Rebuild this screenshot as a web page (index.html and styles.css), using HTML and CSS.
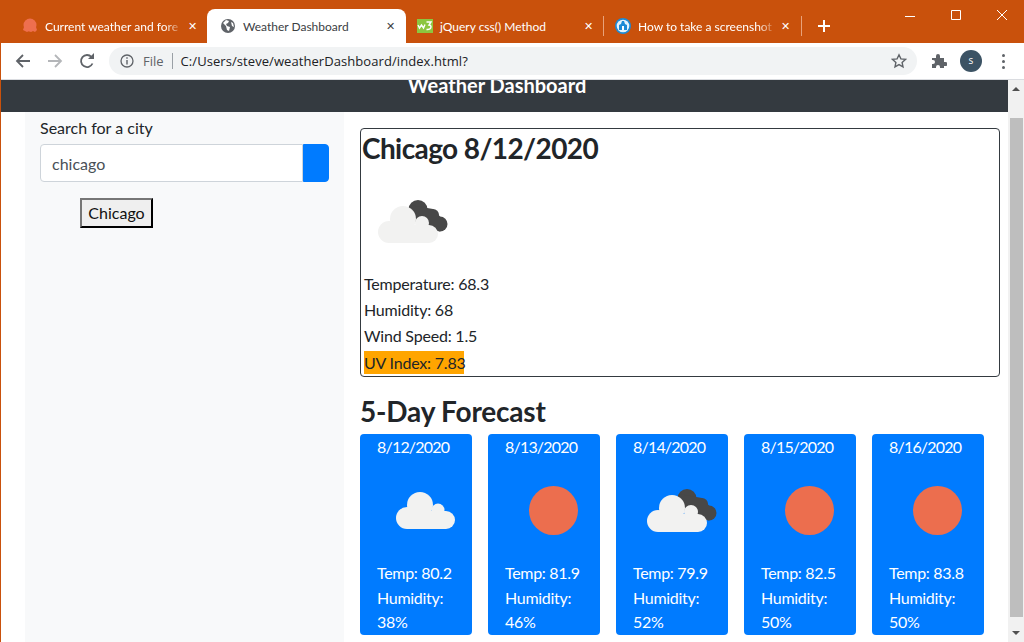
FILE: index.html
```html
<!DOCTYPE html>
<html>
<head>
    <title>Weather Dashboard</title>
    <meta name="viewport" content="width=device-width, initial-scale=1.0">
    <link rel="stylesheet" href="styles.css">
</head>
<body>
<svg class="defs" width="0" height="0">
    <defs>
        <g id="dark-shape">
            <circle cx="54" cy="39.500" r="9.500"/>
            <circle cx="69" cy="45" r="6"/>
            <circle cx="76" cy="54" r="7.500"/>
            <path d="M46 35l23 4 14 15-7 7.500-30-12z"/>
        </g>
        <clipPath id="dark-clip">
            <use href="#dark-shape"/>
        </clipPath>
        <g id="light-cloud" fill="#f2f2f1">
            <circle cx="39" cy="49" r="13"/>
            <circle cx="58" cy="53" r="7"/>
            <circle cx="25" cy="62" r="11"/>
            <circle cx="65" cy="64" r="9"/>
            <rect x="25" y="55" width="40" height="18"/>
        </g>
        <g id="overcast">
            <use href="#dark-shape" fill="#484848"/>
            <g clip-path="url(#dark-clip)" fill="#fafafa">
                <circle cx="39" cy="49" r="14.500"/>
                <circle cx="58" cy="53" r="8.500"/>
                <circle cx="65" cy="64" r="10.500"/>
            </g>
            <use href="#light-cloud"/>
        </g>
        <g id="scattered" fill="#f2f2f1">
            <circle cx="43" cy="46" r="13"/>
            <circle cx="61" cy="51" r="6.500"/>
            <circle cx="30" cy="59" r="11"/>
            <circle cx="69" cy="61" r="9"/>
            <rect x="30" y="52" width="39" height="18"/>
        </g>
    </defs>
</svg>

<div class="tabstrip">
    <div class="tab tab-first">
        <svg class="favicon" viewBox="0 0 16 16"><circle cx="8" cy="7" r="6.500" fill="#ee6f4f"/><path d="M2 9h12l1 3-2 2-2-1-2 1-2-1-2 1-2-1-2-1z" fill="#ee6f4f"/></svg>
        <span class="tab-title fade">Current weather and fore</span>
        <span class="tab-x">&#10005;</span>
    </div>
    <div class="tab tab-active">
        <svg class="favicon" viewBox="0 0 16 16"><circle cx="8" cy="8" r="7" fill="#5f6368"/><path d="M3 5l3-3 3 1-1 2-2 1 1 2 3 1-1 4-2-1-1-4zM11 4l2 1 1 4-2-1z" fill="#fff"/></svg>
        <span class="tab-title">Weather Dashboard</span>
        <span class="tab-x">&#10005;</span>
    </div>
    <div class="tab">
        <svg class="favicon" viewBox="0 0 16 16"><rect y="1" width="16" height="14" fill="#8cc63f"/><path d="M1 7l1.500 3 2-3 2 3L8 6.500M9.500 4H14l-2 3c3 0 3 5-2.500 4.500" fill="none" stroke="#fff" stroke-width="1.400"/></svg>
        <span class="tab-title">jQuery css() Method</span>
        <span class="tab-x">&#10005;</span>
    </div>
    <div class="tab-sep"></div>
    <div class="tab tab-last">
        <svg class="favicon" viewBox="0 0 16 16"><circle cx="8" cy="8" r="8" fill="#1c8ad6"/><circle cx="8" cy="8" r="6.300" fill="#e4f2fb"/><path d="M7 3h2l1 3 2 1v5H4V7l2-1z" fill="#1c8ad6"/><path d="M7 8h2v4H7z" fill="#fff"/></svg>
        <span class="tab-title fade">How to take a screenshot</span>
        <span class="tab-x">&#10005;</span>
    </div>
    <div class="tab-sep"></div>
    <div class="new-tab">
        <svg width="14" height="14" viewBox="0 0 14 14"><path d="M7 1v12M1 7h12" stroke="#fff" stroke-width="2"/></svg>
    </div>
    <div class="win-btns">
        <svg width="16" height="16" viewBox="0 0 16 16"><path d="M2 8.500h10" stroke="#fff"/></svg>
        <svg width="16" height="16" viewBox="0 0 16 16"><path d="M2.500 2.500h9v9h-9z" fill="none" stroke="#fff"/></svg>
        <svg width="16" height="16" viewBox="0 0 16 16"><path d="M2 2l10 10M12 2L2 12" stroke="#fff"/></svg>
    </div>
</div>

<div class="toolbar">
    <svg class="tool-icon" viewBox="0 0 16 16"><path d="M15 8H2M8 2L2 8l6 6" fill="none" stroke="#5f6368" stroke-width="1.800"/></svg>
    <svg class="tool-icon" viewBox="0 0 16 16"><path d="M1 8h13M8 2l6 6-6 6" fill="none" stroke="#b4b6b9" stroke-width="1.800"/></svg>
    <svg class="tool-icon" viewBox="0 0 16 16"><path d="M13.500 10.500A6 6 0 1 1 12.500 4" fill="none" stroke="#5f6368" stroke-width="1.800"/><path d="M9 6h6V0z" fill="#5f6368"/></svg>
    <div class="omnibox">
        <svg class="info" viewBox="0 0 14 14"><circle cx="7" cy="7" r="6" fill="none" stroke="#5f6368" stroke-width="1.300"/><path d="M6.300 6h1.400v4.500H6.300zM6.300 3.300h1.400v1.400H6.300z" fill="#5f6368"/></svg>
        <span class="scheme">File</span>
        <span class="url">C:/Users/steve/weatherDashboard/index.html?</span>
        <svg class="star" viewBox="0 0 16 16"><path d="M8 1.800l1.900 4.100 4.500.5-3.300 3 .9 4.400L8 11.600l-4 2.200.9-4.400-3.300-3 4.500-.5z" fill="none" stroke="#5f6368" stroke-width="1.400"/></svg>
    </div>
    <svg class="puzzle" viewBox="0 0 16 16"><path d="M1 5h4V3a2 2 0 0 1 4 0v2h4v4h1.500a2 2 0 0 1 0 4H13v2H9v-1a2 2 0 0 0-4 0v1H1v-4h1a2 2 0 0 0 0-4H1z" fill="#5f6368"/></svg>
    <div class="avatar">s</div>
    <div class="dots"><i></i><i></i><i></i></div>
</div>

<div class="viewport">
    <div class="page">
        <div class="navbar">Weather Dashboard</div>
        <div class="content">
            <div class="sidebar">
                <label class="search-label">Search for a city</label>
                <div class="input-group">
                    <input class="search-input" type="text" value="chicago">
                    <button class="search-btn"></button>
                </div>
                <button class="city-btn">Chicago</button>
            </div>
            <div class="main">
                <div class="today">
                    <h2>Chicago 8/12/2020</h2>
                    <svg class="weather-icon today-icon" viewBox="0 0 100 100"><use href="#overcast"/></svg>
                    <p>Temperature: 68.3</p>
                    <p>Humidity: 68</p>
                    <p>Wind Speed: 1.5</p>
                    <p><span class="uv">UV Index: 7.83</span></p>
                </div>
                <h3>5-Day Forecast</h3>
                <div class="forecast">
                    <div class="card">
                        <div class="card-date">8/12/2020</div>
                        <svg class="weather-icon" viewBox="0 0 100 100"><use href="#scattered"/></svg>
                        <p>Temp: 80.2</p>
                        <p>Humidity: 38%</p>
                    </div>
                    <div class="card">
                        <div class="card-date">8/13/2020</div>
                        <svg class="weather-icon" viewBox="0 0 100 100"><circle cx="48.500" cy="51.500" r="24.500" fill="#ec6e4e"/></svg>
                        <p>Temp: 81.9</p>
                        <p>Humidity: 46%</p>
                    </div>
                    <div class="card">
                        <div class="card-date">8/14/2020</div>
                        <svg class="weather-icon" viewBox="0 0 100 100"><use href="#overcast"/></svg>
                        <p>Temp: 79.9</p>
                        <p>Humidity: 52%</p>
                    </div>
                    <div class="card">
                        <div class="card-date">8/15/2020</div>
                        <svg class="weather-icon" viewBox="0 0 100 100"><circle cx="48.500" cy="51.500" r="24.500" fill="#ec6e4e"/></svg>
                        <p>Temp: 82.5</p>
                        <p>Humidity: 50%</p>
                    </div>
                    <div class="card">
                        <div class="card-date">8/16/2020</div>
                        <svg class="weather-icon" viewBox="0 0 100 100"><circle cx="48.500" cy="51.500" r="24.500" fill="#ec6e4e"/></svg>
                        <p>Temp: 83.8</p>
                        <p>Humidity: 50%</p>
                    </div>
                </div>
            </div>
        </div>
    </div>
    <div class="scrollbar">
        <div class="arrow-up"></div>
        <div class="thumb"></div>
        <div class="arrow-down"></div>
    </div>
</div>
</body>
</html>
```

FILE: styles.css
```css
html, body {
    margin: 0;
    height: 642px;
    overflow: hidden;
}
body {
    font-family: Lato, "Open Sans", sans-serif;
    background-color: #fff;
    border-left: 1px solid #c9510c;
    box-sizing: border-box;
    width: 1024px;
    color: #212529;
}
.defs {
    display: block;
    height: 0;
}

/* browser chrome */
.tabstrip {
    height: 43px;
    margin-left: -1px;
    background-color: #c9510c;
    display: flex;
    align-items: flex-end;
    padding-left: 9px;
    box-sizing: border-box;
    color: #fff;
    font-size: 12px;
}
.tab {
    width: 197px;
    height: 34px;
    box-sizing: border-box;
    display: flex;
    align-items: center;
    padding: 0 8px 0 11px;
    flex: none;
}
.tab-first {
    width: 198px;
    padding-left: 13px;
}
.tab-active {
    width: 199px;
    padding: 0 9px 0 13px;
    background-color: #fff;
    color: #3c4043;
    border-radius: 8px 8px 0 0;
}
.tab-last {
    padding-right: 9px;
}
.favicon {
    width: 16px;
    height: 16px;
    flex: none;
    margin-right: 7px;
}
.tab-title {
    flex: 1;
    min-width: 0;
    white-space: nowrap;
}
.fade {
    -webkit-mask-image: linear-gradient(to right, #000 85%, transparent);
    mask-image: linear-gradient(to right, #000 85%, transparent);
}
.tab-x {
    font-size: 11px;
    width: 14px;
    text-align: center;
    flex: none;
}
.tab-sep {
    width: 1px;
    height: 20px;
    margin-bottom: 7px;
    background-color: #e8a27a;
    flex: none;
}
.new-tab {
    width: 44px;
    height: 34px;
    display: flex;
    align-items: center;
    justify-content: center;
    flex: none;
}
.win-btns {
    margin-left: auto;
    align-self: flex-start;
    display: flex;
    gap: 30px;
    padding: 8px 13px 0 0;
}
.toolbar {
    height: 37px;
    border-bottom: 1px solid #dadce0;
    box-sizing: border-box;
    display: flex;
    align-items: center;
    margin-left: -1px;
    padding-left: 15px;
    background-color: #fff;
    font-family: "Open Sans", sans-serif;
}
.tool-icon {
    width: 16px;
    height: 16px;
    margin-right: 16px;
    flex: none;
}
.omnibox {
    width: 808px;
    height: 28px;
    margin-left: -2px;
    background-color: #f1f3f4;
    border-radius: 14px;
    display: flex;
    align-items: center;
    padding: 0 10px 0 11px;
    box-sizing: border-box;
    font-size: 13px;
    flex: none;
}
.info {
    width: 14px;
    height: 14px;
    margin-right: 9px;
}
.scheme {
    color: #5f6368;
    padding-right: 8px;
    border-right: 1px solid #9aa0a6;
    line-height: 16px;
    margin-right: 8px;
}
.url {
    color: #202124;
    flex: 1;
    letter-spacing: .07px;
}
.star {
    width: 16px;
    height: 16px;
}
.puzzle {
    width: 16px;
    height: 16px;
    margin-left: 14px;
}
.avatar {
    width: 22px;
    height: 22px;
    border-radius: 50%;
    background-color: #3c5364;
    color: #fff;
    font-size: 10px;
    line-height: 21px;
    text-align: center;
    margin-left: 13px;
}
.dots {
    display: flex;
    flex-direction: column;
    gap: 3px;
    margin-left: 20px;
}
.dots i {
    width: 3px;
    height: 3px;
    border-radius: 50%;
    background-color: #5f6368;
}

/* page */
.viewport {
    display: flex;
    height: 562px;
    overflow: hidden;
}
.page {
    width: 1007px;
    flex: none;
}
.navbar {
    height: 32px;
    background-color: #343a40;
    color: #fff;
    text-align: center;
    font-size: 20px;
    font-weight: 700;
    line-height: 11px;
    padding-right: 15px;
    box-sizing: border-box;
    overflow: hidden;
}
.content {
    display: flex;
    height: 530px;
    padding-left: 24px;
}
.sidebar {
    width: 319px;
    flex: none;
    background-color: #f8f9fa;
    padding: 5px 15px 0;
    box-sizing: border-box;
}
.search-label {
    display: block;
    font-size: 16px;
    line-height: 22px;
    margin-bottom: 5px;
}
.input-group {
    display: flex;
    width: 289px;
    height: 38px;
}
.search-input {
    flex: 1;
    min-width: 0;
    font: inherit;
    font-size: 16px;
    color: #495057;
    border: 1px solid #ced4da;
    border-radius: 4px 0 0 4px;
    padding: 6px 11px;
    box-sizing: border-box;
    outline: none;
}
.search-btn {
    width: 26px;
    border: 1px solid #007bff;
    background-color: #007bff;
    border-radius: 0 4px 4px 0;
    padding: 0;
}
.city-btn {
    display: block;
    margin: 16px 0 0 40px;
    width: 73px;
    height: 30px;
    padding: 0 0 2px;
    font: inherit;
    font-size: 16px;
    color: #111;
    background-color: #efefef;
    border-width: 2px;
    border-style: outset;
    border-color: #767676 #2b2b2b #2b2b2b #767676;
    box-sizing: border-box;
}
.main {
    padding: 16px 0 0 16px;
    flex: 1;
    min-width: 0;
}
.today {
    width: 640px;
    height: 249px;
    border: 1px solid #343a40;
    border-radius: 4px;
    box-sizing: border-box;
    padding-left: 3px;
}
h2 {
    margin: 0 0 0 -2px;
    font-size: 28px;
    font-weight: 700;
    letter-spacing: -.6px;
    line-height: 38px;
}
.weather-icon {
    display: block;
    width: 100px;
    height: 100px;
    margin-bottom: 2px;
}
.today-icon {
    margin: 3px 0 1px;
}
.today p {
    margin: 0;
    font-size: 16px;
    line-height: 26px;
    letter-spacing: -.2px;
}
.uv {
    background-color: #ffa500;
    display: inline-block;
    vertical-align: top;
    white-space: nowrap;
    height: 23px;
    line-height: 23px;
    margin-top: 2px;
    width: 100px;
}
h3 {
    margin: 20px 0 9px;
    font-size: 28px;
    font-weight: 700;
    letter-spacing: -.2px;
    line-height: 28px;
}
.forecast {
    display: flex;
    gap: 16px;
}
.card {
    width: 112px;
    height: 201px;
    background-color: #007bff;
    border-radius: 4px;
    color: #fff;
    padding-left: 17px;
    box-sizing: border-box;
    font-size: 16px;
}
.card-date {
    height: 25px;
    line-height: 26px;
    letter-spacing: -.8px;
}
.card p {
    margin: 0;
    width: 85px;
    line-height: 24.500px;
    letter-spacing: -.3px;
}

/* windows scrollbar */
.scrollbar {
    width: 16px;
    height: 562px;
    background-color: #f1f1f1;
    flex: none;
    display: flex;
    flex-direction: column;
    align-items: center;
}
.arrow-up,
.arrow-down {
    width: 0;
    height: 0;
    border-left: 4px solid transparent;
    border-right: 4px solid transparent;
    flex: none;
}
.arrow-up {
    border-bottom: 4px solid #505050;
    margin: 7px 0 27px;
}
.arrow-down {
    border-top: 4px solid #505050;
    margin-top: 14px;
}
.thumb {
    width: 13px;
    height: 499px;
    flex: none;
    background-color: #bebebe;
}
```
